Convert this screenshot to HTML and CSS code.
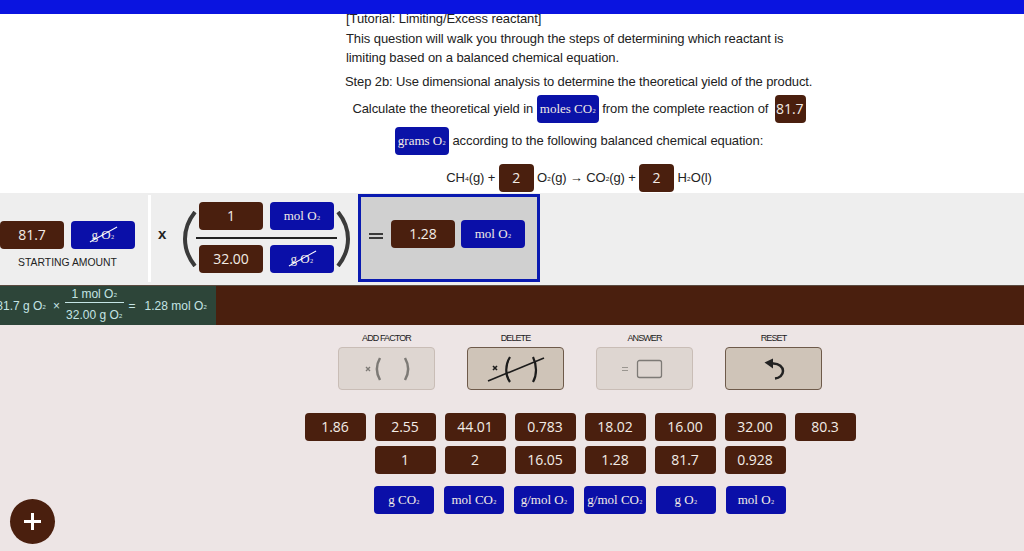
FILE: index.html

```html
<!DOCTYPE html>
<html lang="en">
<head>
  <meta charset="UTF-8">
  <title>Limiting/Excess reactant</title>
  <link rel="stylesheet" href="styles.css">
</head>
<body>
  <div class="topbar"></div>

  <div class="question">
    <p class="line">[Tutorial: Limiting/Excess reactant]</p>
    <p class="line">This question will walk you through the steps of determining which reactant is</p>
    <p class="line">limiting based on a balanced chemical equation.</p>
    <p class="step">Step 2b: Use dimensional analysis to determine the theoretical yield of the product.</p>
    <p class="center first">Calculate the theoretical yield in <span class="chip unit">moles CO<span class="s">₂</span></span> from the complete reaction of <span class="chip num amount">81.7</span></p>
    <p class="center"><span class="chip unit">grams O<span class="s">₂</span></span> according to the following balanced chemical equation:</p>
    <p class="center eq">CH<span class="s">₄</span>(g) + <span class="chip num wide">2</span> O<span class="s">₂</span>(g) → CO<span class="s">₂</span>(g) + <span class="chip num wide">2</span> H<span class="s">₂</span>O(l)</p>
  </div>

  <div class="work">
    <div class="start">
      <div class="pair">
        <div class="tile num">81.7</div>
        <div class="tile unit crossed">g O<span class="s">₂</span></div>
      </div>
      <div class="start-label">STARTING AMOUNT</div>
    </div>
    <div class="divider"></div>
    <div class="times">x</div>
    <svg class="paren" width="14" height="56" viewBox="0 0 14 56"><path d="M12 1C4 11 2 20 2 28s2 17 10 27" fill="none" stroke="#3a3a3a" stroke-width="4"/></svg>
    <div class="fraction">
      <div class="pair">
        <div class="tile num">1</div>
        <div class="tile unit">mol O<span class="s">₂</span></div>
      </div>
      <div class="frac-bar"></div>
      <div class="pair">
        <div class="tile num">32.00</div>
        <div class="tile unit crossed">g O<span class="s">₂</span></div>
      </div>
    </div>
    <svg class="paren" width="14" height="56" viewBox="0 0 14 56"><path d="M2 1c8 10 10 19 10 27s-2 17-10 27" fill="none" stroke="#3a3a3a" stroke-width="4"/></svg>
    <div class="answer">
      <div class="equals"></div>
      <div class="pair">
        <div class="tile num">1.28</div>
        <div class="tile unit">mol O<span class="s">₂</span></div>
      </div>
    </div>
  </div>

  <div class="result">
    <div class="result-math">
      <span>81.7 g O<span class="s">₂</span></span>
      <span class="op">×</span>
      <div class="res-frac">
        <span>1 mol O<span class="s">₂</span></span>
        <span class="res-den">32.00 g O<span class="s">₂</span></span>
      </div>
      <span class="op eq-op">=</span>
      <span>1.28 mol O<span class="s">₂</span></span>
    </div>
  </div>

  <div class="lower">
    <div class="tools">
      <div class="tool">
        <div class="tool-label">ADD FACTOR</div>
        <div class="tool-btn off">
          <svg width="50" height="30" viewBox="0 0 50 30" fill="none" stroke="#7d7a76" stroke-width="2.5"><path d="M4 13l4 4M8 13l-4 4" stroke-width="1.4"/><path d="M18 4c-4 7-4 15 0 22M43 4c4 7 4 15 0 22"/></svg>
        </div>
      </div>
      <div class="tool">
        <div class="tool-label">DELETE</div>
        <div class="tool-btn">
          <svg width="60" height="36" viewBox="0 0 60 36" fill="none" stroke="#1c1c1c" stroke-width="2.2"><path d="M7 15l4 4M11 15l-4 4" stroke-width="1.6"/><path d="M24 6c-5 8-5 18 0 25M47 6c4 8 4 18 0 25"/><path d="M2 30l56-23" stroke-width="1.6"/></svg>
        </div>
      </div>
      <div class="tool">
        <div class="tool-label">ANSWER</div>
        <div class="tool-btn off">
          <svg width="50" height="20" viewBox="0 0 50 20" fill="none" stroke="#7d7a76"><path d="M2 8.500h6M2 11.500h6" stroke-width="1.200" stroke="#9a9690"/><rect x="17.500" y="1.500" width="24" height="17" rx="2" stroke-width="1.300"/></svg>
        </div>
      </div>
      <div class="tool">
        <div class="tool-label">RESET</div>
        <div class="tool-btn">
          <svg width="24" height="24" viewBox="0 0 24 24" fill="none"><path d="M9 6.500h2.500c5.500 0 9.500 3.500 9.500 7.500s-3.500 7-8 7.500" stroke="#222" stroke-width="2.500"/><path d="M2.500 5.500l8.500-4v10z" fill="#222"/></svg>
        </div>
      </div>
    </div>

    <div class="bank">
      <div class="bank-row">
        <div class="tile num">1.86</div>
        <div class="tile num">2.55</div>
        <div class="tile num">44.01</div>
        <div class="tile num">0.783</div>
        <div class="tile num">18.02</div>
        <div class="tile num">16.00</div>
        <div class="tile num">32.00</div>
        <div class="tile num">80.3</div>
      </div>
      <div class="bank-row">
        <div class="tile num">1</div>
        <div class="tile num">2</div>
        <div class="tile num">16.05</div>
        <div class="tile num">1.28</div>
        <div class="tile num">81.7</div>
        <div class="tile num">0.928</div>
      </div>
      <div class="bank-row units">
        <div class="tile unit">g CO<span class="s">₂</span></div>
        <div class="tile unit">mol CO<span class="s">₂</span></div>
        <div class="tile unit">g/mol O<span class="s">₂</span></div>
        <div class="tile unit long">g/mol CO<span class="s">₂</span></div>
        <div class="tile unit">g O<span class="s">₂</span></div>
        <div class="tile unit">mol O<span class="s">₂</span></div>
      </div>
    </div>
  </div>

  <div class="fab"></div>
</body>
</html>
```

FILE: styles.css

```css
* { box-sizing: border-box; }
html, body { height: 100%; }
body {
  margin: 0;
  overflow: hidden;
  font-family: "Liberation Sans", Arial, sans-serif;
  background: #fff;
  color: #222;
  position: relative;
}
p { margin: 0; }

.topbar { height: 14px; background: #0a14e0; position: relative; z-index: 2; }

.s { font-size: 0.8em; vertical-align: 2px; line-height: 0; }

.question {
  width: 468px;
  height: 184px;
  margin-left: 345px;
  margin-top: -5px;
  font-size: 13px;
  letter-spacing: -0.08px;
  white-space: nowrap;
}
.line { line-height: 19.5px; padding-left: 1px; }
.step { line-height: 19.5px; margin-top: 4px; letter-spacing: -0.115px; }
.center { text-align: center; line-height: 28px; margin-top: 4px; }
.center.first { margin-top: 4px; }
.center.eq { margin-top: 9px; letter-spacing: -0.15px; }
.chip {
  display: inline-block;
  height: 28px;
  line-height: 28px;
  border-radius: 4px;
  padding: 0 3px;
  color: #f3ece6;
  vertical-align: top;
  letter-spacing: 0;
}
.chip.unit { background: #0a12a8; font-family: "Liberation Serif", serif; font-size: 13px; }
.chip.num { background: #4a1f0e; font-family: "Open Sans", sans-serif; font-size: 14px; padding: 0 2px; }
.chip.amount { margin-left: 3px; padding: 0 2px 0 1px; }
.chip.wide { width: 35px; text-align: center; }

.tile {
  width: 64px;
  height: 28px;
  line-height: 28px;
  border-radius: 4px;
  text-align: center;
  color: #f3ece6;
  position: relative;
}
.tile.num { background: #4a1f0e; font-family: "Open Sans", sans-serif; font-size: 14px; }
.tile.unit { background: #0a0fa8; font-family: "Liberation Serif", serif; font-size: 13px; }
.tile.crossed::after {
  content: "";
  position: absolute;
  left: 17px;
  top: 13px;
  width: 31px;
  height: 1px;
  background: #fff;
  transform: rotate(-29deg);
}
.pair { display: flex; gap: 7px; }

.work {
  height: 92px;
  background: #eee;
  display: flex;
  align-items: flex-start;
}
.start { margin-top: 28px; width: 135px; }
.start-label { font-size: 10.4px; text-align: center; margin-top: 8px; color: #222; line-height: 12px; }
.divider { width: 3px; height: 87px; background: #fff; margin: 2px 0 0 13px; }
.times { font-size: 15px; font-weight: bold; margin: 32px 16px 0 7px; line-height: 18px; width: 9px; color: #222; }
.paren { margin-top: 18px; flex: none; }
.fraction { margin: 9px 0 0 2px; width: 137px; }
.frac-bar { height: 2px; background: #222; margin: 7px 1px 6px -3px; width: 141px; }
.answer {
  width: 182px;
  height: 88px;
  margin: 1px 0 0 8px;
  border: 3px solid #0a1ab0;
  background: #d0d0d0;
  display: flex;
  align-items: flex-start;
  padding: 23px 0 0 8px;
}
.equals {
  width: 14px;
  height: 6px;
  margin: 13px 8px 0 0;
  border-top: 2px solid #3a3a3a;
  border-bottom: 2px solid #3a3a3a;
}
.answer .pair { gap: 6px; }

.result { height: 40px; background: #4a1f0e; border-top: 1px solid #5a4a40; }
.result-math {
  width: 216px;
  height: 39px;
  background: #2d4539;
  color: #c4e4e4;
  font-size: 12px;
  display: flex;
  align-items: center;
  justify-content: flex-end;
  gap: 5px;
  padding-right: 9px;
  overflow: hidden;
  white-space: nowrap;
}
.result-math .op { margin: 0 0 0 2px; }
.result-math .eq-op { margin: 0 4px 0 0; }
.res-frac { display: flex; flex-direction: column; align-items: center; margin-top: -1px; }
.res-frac span { line-height: 16px; }
.res-frac .s { line-height: 0; }
.res-frac .res-den { border-top: 1px solid #c4e4e4; padding: 4px 1px 0; line-height: 17px; }

.lower {
  height: 226px;
  background: #ede5e5;
  padding: 7px 0 0 136px;
}
.tools { display: flex; justify-content: center; gap: 32px; }
.tool { width: 97px; }
.tool-label { font-size: 9px; line-height: 12px; letter-spacing: -0.9px; text-align: center; color: #222; margin-bottom: 3px; }
.tool-btn {
  height: 43px;
  background: #cfc4b8;
  border: 1px solid #6e5a4a;
  border-radius: 4px;
  display: flex;
  align-items: center;
  justify-content: center;
}
.tool-btn.off { background: #ded6d1; border-color: #c9bdb6; }

.bank { margin-top: 23px; }
.bank-row { display: flex; justify-content: center; gap: 9px; margin-bottom: 5px; }
.bank-row .tile { width: 61px; }
.bank-row.units { margin-top: 12px; gap: 10px; }
.bank-row.units .tile { width: 60px; }
.bank-row.units .tile.long { width: 62px; }

.fab {
  position: absolute;
  left: 10px;
  top: 499px;
  width: 45px;
  height: 45px;
  border-radius: 50%;
  background: #4a1f0e;
}
.fab::before, .fab::after {
  content: "";
  position: absolute;
  background: #fff;
}
.fab::before { left: 14px; top: 21px; width: 17px; height: 3px; }
.fab::after { left: 21px; top: 14px; width: 3px; height: 17px; }
```
